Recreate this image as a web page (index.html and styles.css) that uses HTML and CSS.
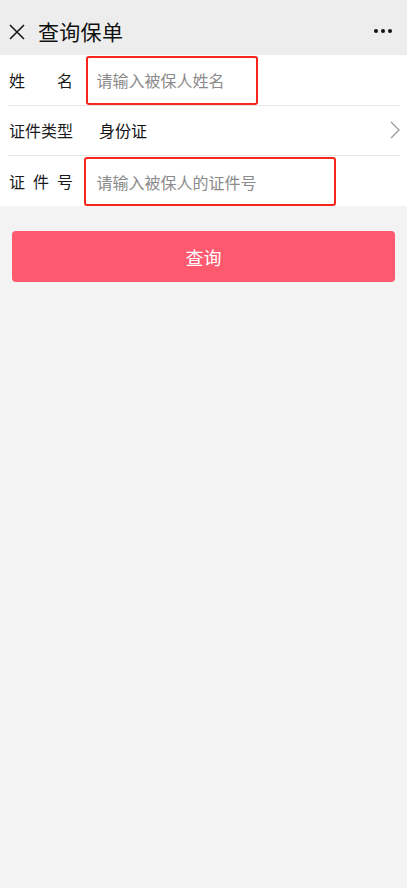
FILE: index.html
```html
<!DOCTYPE html>
<html lang="zh-CN">
<head>
<meta charset="utf-8">
<title>查询保单</title>
<link rel="stylesheet" href="styles.css">
</head>
<body>
<header class="nav">
  <svg class="close" width="16" height="16" viewBox="0 0 16 16"><path d="M1 1 L15 15 M15 1 L1 15" stroke="#1a1a1a" stroke-width="1.6" fill="none"/></svg>
  <h1 class="title">查询保单</h1>
  <div class="more"><span></span><span></span><span></span></div>
</header>
<main class="form">
  <div class="row">
    <label class="label">姓名</label>
    <div class="field box1"><span class="ph">请输入被保人姓名</span></div>
  </div>
  <div class="row">
    <label class="label">证件类型</label>
    <div class="value">身份证</div>
    <svg class="chev" width="10" height="18" viewBox="0 0 10 18"><path d="M1 1 L9 9 L1 17" stroke="#9a9a9a" stroke-width="1.3" fill="none"/></svg>
  </div>
  <div class="row last">
    <label class="label">证件号</label>
    <div class="field box2"><span class="ph">请输入被保人的证件号</span></div>
  </div>
</main>
<div class="actions">
  <button class="btn">查询</button>
</div>
</body>
</html>
```
FILE: styles.css
```css
* { box-sizing: border-box; }
html, body { margin: 0; padding: 0; }
body {
  background: #f3f3f3;
  font-family: "Noto Sans CJK SC", "Noto Sans", sans-serif;
  color: #1a1a1a;
  width: 407px;
  min-height: 888px;
}
.nav {
  height: 55px;
  background: #ededed;
  display: flex;
  align-items: center;
  padding: 7px 15px 0 9px;
}
.close { flex: none; display: block; margin-right: 13px; margin-top: 1px; }
.title {
  margin: 0;
  font-size: 21px;
  font-weight: 400;
  color: #111;
  flex: 1;
  letter-spacing: 0.3px;
}
.more { display: flex; gap: 3px; align-items: center; }
.more span { width: 4px; height: 4px; border-radius: 50%; background: #111; display: block; }
.form { background: #fff; }
.row {
  margin: 0 7px 0 8px;
  height: 50.5px;
  display: flex;
  align-items: center;
  border-bottom: 1px solid #e6e6e6;
  font-size: 16px;
}
.row.last { border-bottom: none; height: 50px; }
.label {
  width: 65px;
  padding-left: 1px;
  text-align: justify;
  text-align-last: justify;
  white-space: nowrap;
  color: #1a1a1a;
  flex: none;
}
.field {
  border: 2.5px solid #f7261c;
  border-radius: 3px;
  height: 49px;
  display: flex;
  align-items: center;
  padding-left: 8.5px;
  margin-top: 1px;
}
.box1 { width: 172px; margin-left: 13px; }
.box2 { width: 252px; margin-left: 11px; padding-left: 10.5px; }
.ph { color: #8a8a8a; font-size: 16px; }
.value { margin-left: 26px; flex: 1; color: #111; }
.chev { flex: none; display: block; margin-right: 0; }
.actions { padding: 25px 12px 0 12px; }
.btn {
  width: 100%;
  height: 51px;
  border: none;
  border-radius: 4px;
  background: #fd5a6f;
  color: #fff;
  font-family: "Noto Sans CJK SC", "Noto Sans", sans-serif;
  font-size: 18px;
  display: block;
}
```
